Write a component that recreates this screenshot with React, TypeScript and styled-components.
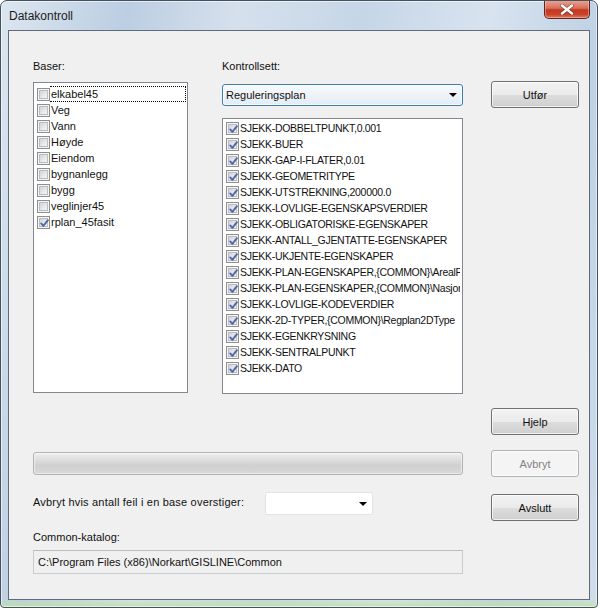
import React from "react";
import styled, { createGlobalStyle } from "styled-components";

const GlobalStyle = createGlobalStyle`
  html, body {
    margin: 0;
    padding: 0;
    background: #ffffff;
  }
  body {
    font-family: "Liberation Sans", Arial, sans-serif;
    font-size: 11px;
    color: #111;
  }
`;

const Window = styled.div`
  width: 598px;
  height: 608px;
  box-sizing: border-box;
  border: 1px solid #45525f;
  border-radius: 7px 7px 4px 4px;
  padding: 0 7px 7px 7px;
  display: flex;
  flex-direction: column;
  background:
    linear-gradient(to top, rgba(190, 226, 160, 0.85) 0px, rgba(190, 226, 160, 0) 8px),
    linear-gradient(
      100deg,
      #dce6f0 0%,
      #bccee2 18%,
      #d5e0ec 34%,
      #c6d6e7 52%,
      #d8e3ef 70%,
      #bfd1e4 86%,
      #d0dde9 100%
    );
  box-shadow: inset 0 0 0 1px rgba(255, 255, 255, 0.55);
  overflow: hidden;
`;

const TitleBar = styled.div`
  height: 29px;
  flex: none;
  display: flex;
  align-items: center;
  justify-content: space-between;
`;

const Title = styled.span`
  font-family: "Liberation Sans", Arial, sans-serif;
  font-size: 12px;
  color: #1b1b1b;
  margin-left: 1px;
  margin-top: 1px;
`;

const CloseButton = styled.div`
  align-self: flex-start;
  margin-top: -1px;
  width: 46px;
  height: 19px;
  box-sizing: border-box;
  border: 1px solid #5e2420;
  border-top: none;
  border-radius: 0 0 5px 5px;
  background: linear-gradient(
    to bottom,
    #eaa898 0%,
    #d8705c 45%,
    #c2381f 55%,
    #c9432a 80%,
    #e07a5e 100%
  );
  display: flex;
  align-items: center;
  justify-content: center;
  box-shadow: inset 0 0 0 1px rgba(255, 210, 200, 0.45);
`;

const Client = styled.div`
  flex: 1;
  box-sizing: border-box;
  border: 1px solid #5f6b78;
  background: #f0f0f0;
  padding: 28px 0 0 24px;
  display: flex;
  flex-direction: column;
`;

const TopSection = styled.div`
  display: flex;
  align-items: flex-start;
`;

const Column = styled.div<{ $width: number; $gap?: number }>`
  width: ${(p) => p.$width}px;
  margin-left: ${(p) => p.$gap ?? 0}px;
  display: flex;
  flex-direction: column;
`;

const Label = styled.div`
  line-height: 14px;
  height: 14px;
  white-space: nowrap;
`;

const ListBox = styled.div<{ $height: number; $top: number; $padTop: number }>`
  height: ${(p) => p.$height}px;
  margin-top: ${(p) => p.$top}px;
  box-sizing: border-box;
  border: 1px solid #828790;
  background: #fff;
  padding: ${(p) => p.$padTop}px 0 0 3px;
  overflow: hidden;
`;

const Row = styled.div`
  height: 16px;
  display: flex;
  align-items: center;
`;

const ItemText = styled.span<{ $focused?: boolean; $caps?: boolean }>`
  flex: 1;
  min-width: 0;
  height: 16px;
  box-sizing: border-box;
  line-height: 14px;
  padding-left: 1px;
  margin-right: 1px;
  white-space: nowrap;
  overflow: hidden;
  font-size: ${(p) => (p.$caps ? "10.5px" : "11px")};
  letter-spacing: ${(p) => (p.$caps ? "-0.3px" : "0")};
  border: 1px dotted ${(p) => (p.$focused ? "#000" : "transparent")};
  border-left: none;
`;

const Box = styled.span`
  width: 13px;
  height: 13px;
  flex: none;
  box-sizing: border-box;
  border: 1px solid #8e8f8f;
  background: #f4f4f4;
  padding: 1px;
  display: flex;
  position: relative;
`;

const BoxInner = styled.span`
  flex: 1;
  border: 1px solid #b9bec4;
  background: linear-gradient(135deg, #d1d4d8 0%, #e6e7e9 55%, #f6f6f6 100%);
`;

const CheckMark = styled.svg`
  position: absolute;
  left: 0;
  top: 0;
`;

const SelectBox = styled.div`
  margin-top: 11px;
  height: 22px;
  box-sizing: border-box;
  border: 1px solid #3c7fb1;
  border-radius: 3px;
  background: linear-gradient(to bottom, #f7fafd 0%, #eef3f8 50%, #e4ebf3 100%);
  display: flex;
  align-items: center;
  justify-content: space-between;
  padding: 0 5px 0 3px;
  box-shadow: inset 0 0 0 1px rgba(255, 255, 255, 0.8);
`;

const SmallCombo = styled.div`
  width: 108px;
  height: 23px;
  margin-left: 232px;
  box-sizing: border-box;
  border: 1px solid #e0e5ea;
  border-radius: 2px;
  background: #fff;
  display: flex;
  align-items: center;
  justify-content: flex-end;
  padding-right: 5px;
`;

const Arrow = styled.span`
  width: 0;
  height: 0;
  border-left: 4px solid transparent;
  border-right: 4px solid transparent;
  border-top: 4px solid #000;
`;

const Button = styled.div<{ $top?: number; $disabled?: boolean }>`
  width: 88px;
  height: 27px;
  margin-top: ${(p) => p.$top ?? 0}px;
  box-sizing: border-box;
  border: 1px solid ${(p) => (p.$disabled ? "#adb2b5" : "#707070")};
  border-radius: 3px;
  background: ${(p) =>
    p.$disabled
      ? "#f4f4f4"
      : "linear-gradient(to bottom, #f2f2f2 0%, #ebebeb 50%, #dddddd 51%, #cfcfcf 100%)"};
  box-shadow: inset 0 0 0 1px rgba(255, 255, 255, 0.7);
  color: ${(p) => (p.$disabled ? "#838383" : "#111")};
  display: flex;
  align-items: center;
  justify-content: center;
  flex: none;
`;

const ButtonRow = styled.div<{ $top: number }>`
  display: flex;
  justify-content: flex-end;
  width: 546px;
  margin-top: ${(p) => p.$top}px;
`;

const WideRow = styled.div<{ $top: number; $align?: string }>`
  display: flex;
  align-items: ${(p) => p.$align ?? "flex-start"};
  margin-top: ${(p) => p.$top}px;
`;

const LeftGroup = styled.div`
  width: 430px;
  margin-right: 28px;
  display: flex;
  align-items: flex-start;
`;

const Progress = styled.div`
  width: 430px;
  height: 23px;
  margin-right: 28px;
  box-sizing: border-box;
  border: 1px solid #b2b2b2;
  border-radius: 3px;
  background: linear-gradient(to bottom, #f0f0f0 0%, #dcdcdc 35%, #d0d0d0 60%, #d8d8d8 100%);
  box-shadow: inset 0 0 0 1px rgba(255, 255, 255, 0.5);
`;

const LimitLabel = styled.span`
  line-height: 14px;
  white-space: nowrap;
  width: 0;
  margin-top: 3px;
  letter-spacing: 0.2px;
`;

const PathBox = styled.div`
  width: 430px;
  height: 24px;
  margin-top: 6px;
  box-sizing: border-box;
  border: 1px solid #c9cdd1;
  border-top-color: #b9bdc1;
  background: #f0f0f0;
  display: flex;
  align-items: center;
  padding-left: 4px;
  white-space: nowrap;
`;

const baser = [
  { name: "elkabel45", checked: false },
  { name: "Veg", checked: false },
  { name: "Vann", checked: false },
  { name: "Høyde", checked: false },
  { name: "Eiendom", checked: false },
  { name: "bygnanlegg", checked: false },
  { name: "bygg", checked: false },
  { name: "veglinjer45", checked: false },
  { name: "rplan_45fasit", checked: true },
];

const kontroller = [
  "SJEKK-DOBBELTPUNKT,0.001",
  "SJEKK-BUER",
  "SJEKK-GAP-I-FLATER,0.01",
  "SJEKK-GEOMETRITYPE",
  "SJEKK-UTSTREKNING,200000.0",
  "SJEKK-LOVLIGE-EGENSKAPSVERDIER",
  "SJEKK-OBLIGATORISKE-EGENSKAPER",
  "SJEKK-ANTALL_GJENTATTE-EGENSKAPER",
  "SJEKK-UKJENTE-EGENSKAPER",
  "SJEKK-PLAN-EGENSKAPER,{COMMON}\\ArealP",
  "SJEKK-PLAN-EGENSKAPER,{COMMON}\\Nasjon",
  "SJEKK-LOVLIGE-KODEVERDIER",
  "SJEKK-2D-TYPER,{COMMON}\\Regplan2DType",
  "SJEKK-EGENKRYSNING",
  "SJEKK-SENTRALPUNKT",
  "SJEKK-DATO",
];

const CheckBox: React.FC<{ checked?: boolean }> = ({ checked }) => (
  <Box>
    <BoxInner />
    {checked && (
      <CheckMark width="13" height="13" viewBox="0 0 13 13">
        <path
          d="M3.2 6.4 L5.4 8.9 L9.9 3.2"
          fill="none"
          stroke="#4f68a6"
          strokeWidth="1.9"
          strokeLinecap="round"
          strokeLinejoin="round"
        />
      </CheckMark>
    )}
  </Box>
);

const CloseIcon = () => (
  <svg width="14" height="11" viewBox="0 0 14 11">
    <path
      d="M2 1.5 L12 9.5 M12 1.5 L2 9.5"
      stroke="#3a1410"
      strokeWidth="3.6"
      strokeLinecap="round"
      opacity="0.5"
    />
    <path
      d="M2 1.5 L12 9.5 M12 1.5 L2 9.5"
      stroke="#ffffff"
      strokeWidth="2.4"
      strokeLinecap="round"
    />
  </svg>
);

const App: React.FC = () => {
  return (
    <>
      <GlobalStyle />
      <Window>
        <TitleBar>
          <Title>Datakontroll</Title>
          <CloseButton>
            <CloseIcon />
          </CloseButton>
        </TitleBar>
        <Client>
          <TopSection>
            <Column $width={155}>
              <Label>Baser:</Label>
              <ListBox $height={311} $top={9} $padTop={3}>
                {baser.map((b, i) => (
                  <Row key={b.name}>
                    <CheckBox checked={b.checked} />
                    <ItemText $focused={i === 0}>{b.name}</ItemText>
                  </Row>
                ))}
              </ListBox>
            </Column>
            <Column $width={241} $gap={34}>
              <Label>Kontrollsett:</Label>
              <SelectBox>
                <span>Reguleringsplan</span>
                <Arrow />
              </SelectBox>
              <ListBox $height={276} $top={12} $padTop={1}>
                {kontroller.map((k, i) => (
                  <Row key={i}>
                    <CheckBox checked />
                    <ItemText $caps>{k}</ItemText>
                  </Row>
                ))}
              </ListBox>
            </Column>
            <Column $width={88} $gap={28}>
              <Button $top={22}>Utfør</Button>
            </Column>
          </TopSection>

          <ButtonRow $top={14}>
            <Button>Hjelp</Button>
          </ButtonRow>

          <WideRow $top={15} $align="center">
            <Progress />
            <Button $disabled>Avbryt</Button>
          </WideRow>

          <WideRow $top={15}>
            <LeftGroup>
              <LimitLabel>Avbryt hvis antall feil i en base overstiger:</LimitLabel>
              <SmallCombo>
                <Arrow />
              </SmallCombo>
            </LeftGroup>
            <Button $top={2}>Avslutt</Button>
          </WideRow>

          <WideRow $top={9}>
            <Column $width={430}>
              <Label>Common-katalog:</Label>
              <PathBox>C:\Program Files (x86)\Norkart\GISLINE\Common</PathBox>
            </Column>
          </WideRow>
        </Client>
      </Window>
    </>
  );
};

export default App;
